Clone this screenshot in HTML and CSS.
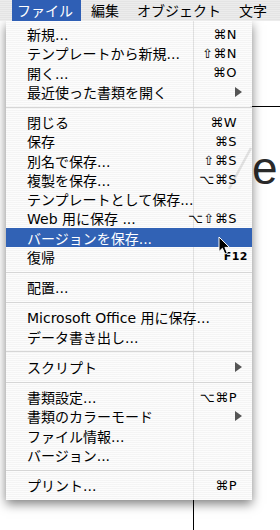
FILE: index.html
```html
<!DOCTYPE html>
<html lang="ja">
<head>
<meta charset="utf-8">
<title>ファイル メニュー</title>
<link rel="stylesheet" href="styles.css">
</head>
<body>
<div class="screen">
  <div class="menubar">
    <span class="mb-item active">ファイル</span>
    <span class="mb-item">編集</span>
    <span class="mb-item">オブジェクト</span>
    <span class="mb-item">文字</span>
  </div>

  <div class="doc">
    <svg class="doc-art" width="280" height="509" viewBox="0 0 280 509">
      <line x1="193.5" y1="0" x2="193.5" y2="509" stroke="#000" stroke-width="1"/>
      <line x1="250" y1="85.5" x2="280" y2="85.5" stroke="#000" stroke-width="1"/>
      <line x1="251" y1="127" x2="229" y2="168" stroke="#000" stroke-width="2.5"/>
    </svg>
    <span class="glyph-e">e</span>
  </div>

  <div class="menu">
    <div class="item"><span class="label">新規...</span><span class="key">⌘N</span></div>
    <div class="item"><span class="label">テンプレートから新規...</span><span class="key">⇧⌘N</span></div>
    <div class="item"><span class="label">開く...</span><span class="key">⌘O</span></div>
    <div class="item"><span class="label">最近使った書類を開く</span><span class="arrow"></span></div>
    <div class="sep"></div>
    <div class="item"><span class="label">閉じる</span><span class="key">⌘W</span></div>
    <div class="item"><span class="label">保存</span><span class="key">⌘S</span></div>
    <div class="item"><span class="label">別名で保存...</span><span class="key">⇧⌘S</span></div>
    <div class="item"><span class="label">複製を保存...</span><span class="key">⌥⌘S</span></div>
    <div class="item"><span class="label">テンプレートとして保存...</span></div>
    <div class="item"><span class="label">Web 用に保存 ...</span><span class="key">⌥⇧⌘S</span></div>
    <div class="item selected"><span class="label">バージョンを保存...</span></div>
    <div class="item"><span class="label">復帰</span><span class="key fkey">F12</span></div>
    <div class="sep"></div>
    <div class="item"><span class="label">配置...</span></div>
    <div class="sep"></div>
    <div class="item"><span class="label">Microsoft Office 用に保存...</span></div>
    <div class="item"><span class="label">データ書き出し...</span></div>
    <div class="sep"></div>
    <div class="item"><span class="label">スクリプト</span><span class="arrow"></span></div>
    <div class="sep"></div>
    <div class="item"><span class="label">書類設定...</span><span class="key">⌥⌘P</span></div>
    <div class="item"><span class="label">書類のカラーモード</span><span class="arrow"></span></div>
    <div class="item"><span class="label">ファイル情報...</span></div>
    <div class="item"><span class="label">バージョン...</span></div>
    <div class="sep"></div>
    <div class="item"><span class="label">プリント...</span><span class="key">⌘P</span></div>
  </div>

  <svg class="cursor" width="14" height="20" viewBox="0 0 14 20">
    <path d="M1 1 L1 15.5 L4.4 12.3 L6.9 18 L9.3 17 L6.9 11.4 L11.5 11.4 Z" fill="#000" stroke="#fff" stroke-width="1" stroke-linejoin="round"/>
  </svg>
</div>
</body>
</html>
```

FILE: styles.css
```css
* { box-sizing: border-box; }

html, body {
  margin: 0;
  padding: 0;
  background: #fff;
}

.screen {
  position: relative;
  width: 280px;
  height: 530px;
  overflow: hidden;
  background: #fff;
  font-family: "DejaVu Sans", "Noto Sans CJK JP", sans-serif;
  color: #000;
}

/* ---------- menu bar ---------- */
.menubar {
  height: 21px;
  display: flex;
  align-items: stretch;
  padding-left: 12px;
  background: repeating-linear-gradient(to bottom, #ececec 0 1px, #e4e4e4 1px 2px);
  font-family: "Noto Sans CJK JP", sans-serif;
  font-size: 14px;
  line-height: 21px;
  position: relative;
  z-index: 3;
}

.mb-item {
  padding: 0 8px 0 5px;
  margin-right: 5px;
  white-space: nowrap;
}

.mb-item.active {
  background: #2f5fb5;
  color: #fff;
}

/* ---------- document behind ---------- */
.doc {
  position: relative;
  height: 509px;
}

.doc-art {
  position: absolute;
  left: 0;
  top: 0;
}

.glyph-e {
  position: absolute;
  left: 252px;
  top: 124px;
  font-family: "Liberation Sans", sans-serif;
  font-size: 46px;
  line-height: 1;
  color: #2a2a2a;
}

/* ---------- dropdown menu ---------- */
.menu {
  position: absolute;
  left: 6px;
  top: 21px;
  width: 246px;
  padding: 3.5px 0 5px;
  background: repeating-linear-gradient(to bottom, rgba(252,252,252,0.9) 0 1px, rgba(243,243,243,0.9) 1px 2px);
  box-shadow: 0 4px 10px rgba(0,0,0,0.5);
  z-index: 2;
  font-size: 14px;
}

.item {
  height: 19.25px;
  display: flex;
  align-items: center;
  padding: 0 15px 0 21px;
  white-space: nowrap;
}

.label {
  flex: 1;
}

.key {
  font-size: 13px;
  letter-spacing: 0.5px;
}

.fkey {
  font-size: 11px;
  font-weight: bold;
  margin-right: -11px;
}

.item.selected {
  background: #3162b5;
  color: #fff;
}

.arrow {
  width: 0;
  height: 0;
  border-top: 5px solid transparent;
  border-bottom: 5px solid transparent;
  border-left: 7px solid #555;
  margin-right: -5px;
}

.sep {
  height: 11px;
  display: flex;
  align-items: center;
}

.sep::before {
  content: "";
  flex: 1;
  height: 1px;
  background: #d6d6d6;
}

/* ---------- pointer ---------- */
.cursor {
  position: absolute;
  left: 218px;
  top: 236px;
  z-index: 4;
}
```
